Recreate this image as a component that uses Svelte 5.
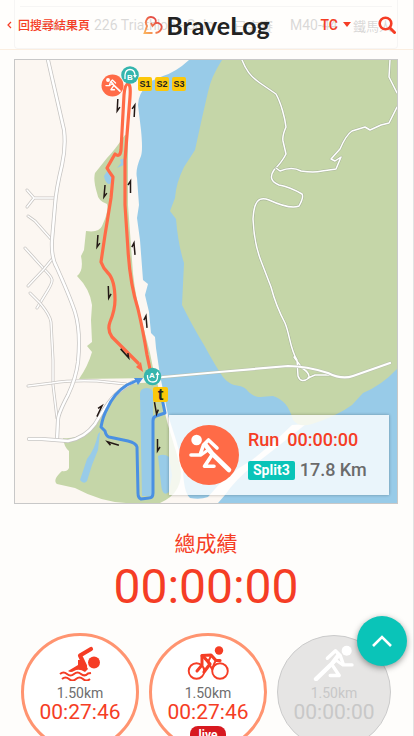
<script>
  const arrows = [
    [118, 105, 183], [134, 111, 3], [105, 191, 185], [130, 187, 0],
    [98, 241, 184], [134, 249, -5], [109, 292, 178], [146, 322, -5],
    [125, 353, 138], [156, 408, 170], [99, 411, 25], [158, 445, 180], [113, 444, -73]
  ];

  const lanes = [
    'M27 190 L34 198 L55 198 M34 198 L27 207',
    'M28 216 L35 221 L51 239',
    'M25 248 L44 269 C54 279 54 280 48 290 L37 308',
    'M53 258 L44 269 L28 286',
    'M30 293 L40 303 Q50 315 51 322 L53 360 L53 385 L57 418',
    'M28 386 L52 383 Q70 380 97 381 L126 384'
  ];
  const avenues = [
    'M48 60 L56 95 L64 130 Q66 147 62 165 Q56 190 55 205 L52 240 Q51 258 57 268 Q70 297 75 312 Q81 332 78 362 Q76 378 68 395 Q58 414 58 420 L57 440',
    'M29 439 L42 439 L68 441 Q85 438 95 424 C107 404 112 394 133 382'
  ];
  const hills = [
    'M242 60 C246 70 250 76 260 83 L276 94 C281 103 285 118 286 127 Q282 136 283 141 L286 154 Q282 162 274 170 Q267 180 279 185 Q290 187 302 194 Q304 197 299 206 C292 209 280 205 269 200 C258 196 254 202 253 219 Q254 243 261 261 L271 287 Q276 306 285 323 C290 335 290 349 297 360 L298 376 Q301 384 309 378 Q310 373 302 368 L294 357 M308 378 L315 375 L331 375',
    'M276 168 L280 171 Q292 166 301 171 Q314 173 322 171 L336 169 L341 157 L335 161 L331 159 L340 149 Q346 135 352 131 L365 127 L370 130 L381 125 L389 123 L397 107',
    'M390 60 L389 77 L397 93'
  ];

  const legs = [
    { kind: 'swim', km: '1.50km', time: '00:27:46', done: true, live: false },
    { kind: 'bike', km: '1.50km', time: '00:27:46', done: true, live: true },
    { kind: 'run', km: '1.50km', time: '00:00:00', done: false, live: false }
  ];
</script>

{#snippet runner()}
  <g fill="none" stroke="currentColor" stroke-width="3.600" stroke-linecap="round" stroke-linejoin="round">
    <circle cx="17.600" cy="15" r="5.300" fill="currentColor" stroke="none" />
    <path d="M12 30 H21 L24.500 20 L29.500 15 L38 23" />
    <path d="M26.500 20 L33 28.500 L50 45" stroke-width="4.600" />
    <path d="M33 29 L29 25 L22 30" stroke-width="3" />
    <path d="M33 30 L25.500 41.200 H35" />
  </g>
{/snippet}

<div class="page">
  <header class="bar">
    <a class="back" href="#results">
      <svg width="5" height="8" viewBox="0 0 5 8" aria-hidden="true"><path d="M4 1 L1 4 L4 7" fill="none" stroke="currentColor" stroke-width="1.200" /></svg>
      回搜尋結果頁
    </a>
    <a class="brand" href="#home">
      <svg width="20" height="20" viewBox="0 0 20 20" aria-hidden="true">
        <defs><linearGradient id="heart" x1="0" y1="1" x2="1" y2="0"><stop offset="0" stop-color="#fbb35c" /><stop offset="0.500" stop-color="#ef6b4a" /><stop offset="1" stop-color="#d8283c" /></linearGradient></defs>
        <path d="M9.500 18 H1.500 L4 11 C1 6.500 4.500 2 8 2 C12 2 14 5.500 12 8.500 L9.500 11 L8 8 M12 8.500 C15.500 6.500 19.500 10 18.500 13 C18 15.500 15.500 17.500 12.500 18" fill="none" stroke="url(#heart)" stroke-width="1.800" />
      </svg>
      <span>BraveLog</span>
    </a>
    <div class="tools">
      <button class="lang" type="button">TC<span class="caret"></span></button>
      <button class="search" type="button" aria-label="Search">
        <svg width="18" height="18" viewBox="0 0 18 18" aria-hidden="true"><circle cx="7.500" cy="7.500" r="5.800" fill="none" stroke="currentColor" stroke-width="2.600" /><path d="M12 12 L16.500 16.500" stroke="currentColor" stroke-width="3" stroke-linecap="round" /></svg>
      </button>
    </div>
  </header>

  <section class="entry">
    <div class="row">
      <span class="bib">#0038</span>
      <span class="race">226 Triathlon - Solo</span>
      <span class="state">已完賽</span>
      <span class="group">M40-44</span>
      <span class="team">鐵馬人</span>
    </div>
  </section>

  <section class="map">
    <svg class="chart" viewBox="15 60 382 443" role="img" aria-label="Race course map">
      <rect x="15" y="60" width="382" height="443" fill="#fcf7f2" />
      <path fill="#98cbe8" d="M189 60 Q176 72 163 76 L149 82 Q138 94 138 105 L141 130 Q143 150 141 156 Q135 170 137 178 L139 205 L137 218 L140 240 L143 280 L148 284 L145 295 L149 312 L151 333 L155 337 L156 348 L160 375 L164 395 L168 415 L176 440 L183 465 Q183 492 190 498 Q200 500 208 497 L216 503 H397 V60 Z" />
      <path fill="#fcf7f2" d="M208 497 Q225 475 252 460 Q278 439 292 425 L306 424 Q275 449 254 465 Q235 480 225 495 L218 503 H207 Z" />
      <path fill="#c5d6a8" d="M222 60 Q211 77 208 92 L202 118 L195 150 L184 167 Q176 183 175 198 L170 211 L176 219 Q178 244 184 263 L182 305 Q193 327 204 345 Q216 367 223 377 C233 389 239 383 246 389 C256 401 262 396 273 396 C284 400 289 406 293 420 Q299 428 312 424 Q337 416 352 405 L363 393 Q382 385 397 369 V60 Z" />
      <path fill="#c5d6a8" d="M125 135 Q114 151 107 158 L95 173 Q93 180 97 193 Q98 201 107 204 Q109 211 102 226 Q99 233 86 231 L84 250 L81 256 Q84 271 77 276 Q90 289 92 305 L91 320 L92 342 L87 346 L92 352 Q88 366 79 379 L155 378 L150 353 L141 318 Q133 285 132 260 L128 205 V135 Z" />
      <path fill="#c5d6a8" d="M125 384 Q110 398 100 419 Q84 440 63 438 Q64 447 69 451 V468 Q67 472 62 471 Q52 480 57 484 L75 488 Q101 502 126 503 H160 Q185 492 180 465 L168 425 L157 382 Z" />
      <path fill="#98cbe8" d="M140 394 Q140 388 147 388 Q153 388 153 395 V496 H142 Z M100 432 L98 450 L92 465 L87 481 Q84 485 80 480 L87 459 Q95 449 98 434 Z M158 456 Q164 453 169 457 L172 475 L169 492 Q162 498 161 483 Z M104 176 L109 168 L113 180 Q109 188 105 180 Z M120 160 Q126 156 126 164 L117 168 L121 163 Z" />

      <g fill="none" stroke-linejoin="round" stroke-linecap="round">
        {#each lanes as d}
          <path {d} stroke="#c9c6c3" stroke-width="3" /><path {d} stroke="#fff" stroke-width="1.500" />
        {/each}
        {#each avenues as d}
          <path {d} stroke="#c6c4c2" stroke-width="4" /><path {d} stroke="#fff" stroke-width="2.500" />
        {/each}
        {#each hills as d}
          <path {d} stroke="#a9b59b" stroke-width="2.600" /><path {d} stroke="#fff" stroke-width="1.500" />
        {/each}
        <path d="M152 378 L219 372 L288 366 Q306 366 328 373 Q342 380 353 376 L390 363" stroke="#b8bfae" stroke-width="3.200" />
        <path d="M152 378 L219 372 L288 366 Q306 366 328 373 Q342 380 353 376 L390 363" stroke="#fff" stroke-width="2.200" />
        <path d="M162 398 L165 413 L156 416 Q153 417 153 421 V493 Q153 498 149 498 L141 499 Q138 498 138 493 L137 447 Q136 443 128 441 L109 437 Q106 436 105 431 L101 427 Q103 416 107 409 Q114 393 127 385 L138 380" stroke="#4a90e2" stroke-width="3" />
        <path d="M151 374 L147 355 Q143 330 138 309 Q130 284 128 250 L125 205 V160 L130 97 Q131 84 128 84 Q125 84 124 95 L121 150 Q120 158 115 154 L107 168 Q108 170 113 177 L111 198 L105 235 L101 262 Q103 268 108 273 Q115 280 115 300 Q115 310 110 322 Q107 330 112 337 L138 363" stroke="#ff6b47" stroke-width="3.200" />
      </g>
      <path d="M143 372 L141 362 L136 367 Z" fill="#ff6b47" />
      <path d="M143 378 L134 378 L138 385 Z" fill="#4a90e2" />

      {#each arrows as [x, y, turn]}
        <path transform="translate({x} {y}) rotate({turn})" d="M0.500 6 V-6 L-2 -2" fill="none" stroke="#231815" stroke-width="1.500" />
      {/each}

      <circle cx="112.500" cy="85.500" r="11" fill="#ff6b47" />
      <g transform="translate(101.500 74.500) scale(0.370)" color="#fff">{@render runner()}</g>
      <circle cx="130" cy="75" r="8.800" fill="#35b5ad" />
      <path d="M125 79 V75 Q125.500 69.500 130 69.500 Q134.500 69.500 135 75" fill="none" stroke="#fff" stroke-width="1.300" />
      <path d="M133 75 H137 L135 78 Z" fill="#fff" />
      <text class="pin" x="130" y="79.500" fill="#fff">B</text>
      <circle cx="152.500" cy="376.500" r="8.800" fill="#35b5ad" />
      <path d="M147.500 375 V377 Q148 382 153 382 Q157.500 382 157.500 377 V375" fill="none" stroke="#fff" stroke-width="1.300" />
      <path d="M155.500 375 H159.500 L157.500 371.500 Z" fill="#fff" />
      <text class="pin" x="152" y="377.500" fill="#fff">A</text>
      {#each ['S1', 'S2', 'S3'] as stop, i}
        <rect x={138 + i * 17} y="77" width="14" height="14" rx="2" fill="#fcc70a" />
        <text class="stop" x={145 + i * 17} y="87">{stop}</text>
      {/each}
      <rect x="153" y="387" width="15" height="15" rx="2" fill="#fcc70a" />
      <text class="tee" x="160.500" y="400">t</text>
    </svg>

    <div class="status">
      <svg width="60" height="60" viewBox="0 0 60 60" aria-hidden="true"><circle cx="30" cy="30" r="30" fill="#ff6b47" /><g color="#fff">{@render runner()}</g></svg>
      <div class="facts">
        <p class="now"><span>Run</span><span>00:00:00</span></p>
        <p class="split"><b>Split3</b><span>17.8 Km</span></p>
      </div>
    </div>
  </section>

  <section class="total">
    <h2>總成績</h2>
    <p>00:00:00</p>
  </section>

  <section class="legs">
    {#each legs as leg}
      <article class="leg" class:idle={!leg.done}>
        {#if leg.kind === 'swim'}
          <svg width="42" height="36" viewBox="0 0 42 36" aria-hidden="true">
            <circle cx="35" cy="17.500" r="6" fill="currentColor" />
            <path d="M32 4 L21 10.500 L26 21" fill="none" stroke="currentColor" stroke-width="4.200" stroke-linecap="round" stroke-linejoin="round" />
            <path d="M19 15 L24 15 L29 24 L26 27 Q20 23 15 26 Q12 28 9 26 L19 20 Z" fill="currentColor" />
            <path d="M1 29 Q4.500 26 8 29 T15 29 T22 29 T29 28.500 L32 28 M3 34 Q6.500 31 10 34 T17 34 T24 34 T31 34" fill="none" stroke="currentColor" stroke-width="2" />
          </svg>
        {:else if leg.kind === 'bike'}
          <svg width="42" height="36" viewBox="0 0 42 36" aria-hidden="true">
            <g fill="none" stroke="currentColor" stroke-linejoin="round" stroke-linecap="round">
              <circle cx="9.500" cy="26" r="7.800" stroke-width="1.900" /><circle cx="33" cy="26" r="7.800" stroke-width="1.900" />
              <path d="M15 10.500 L24 10 L29 15.500 H33" stroke-width="3.200" />
              <path d="M15 11 L15 20 L10 26" stroke-width="3" />
              <path d="M16 11 L23 19 L17 27" stroke-width="3.200" />
              <path d="M24 11 L21 17 L25 24 L28 17" stroke-width="2" />
            </g>
            <circle cx="32" cy="5.500" r="4.200" fill="currentColor" />
          </svg>
        {:else}
          <svg width="42" height="36" viewBox="10 9 42 38" aria-hidden="true"><g transform="translate(62 0) scale(-1 1)">{@render runner()}</g></svg>
        {/if}
        <span class="km">{leg.km}</span>
        <span class="time">{leg.time}</span>
        {#if leg.live}<span class="live">live</span>{/if}
      </article>
    {/each}
  </section>

  <button class="top" type="button" aria-label="Back to top">
    <svg width="20" height="12" viewBox="0 0 20 12" aria-hidden="true"><path d="M1 11 L10 2 L19 11" fill="none" stroke="#fff" stroke-width="2.600" /></svg>
  </button>
</div>

<style>
  :global(body) { background: #fefdfb; }
  .page {
    position: relative;
    box-sizing: border-box;
    height: 100vh;
    overflow: hidden;
    padding: 0 15px 0 14px;
    border-right: 1px solid #e2e2e2;
    background: #fefdfb;
    font-family: Roboto, "Noto Sans CJK TC", sans-serif;
    color: #f53d25;
  }
  a { color: inherit; text-decoration: none; }
  button { padding: 0; border: 0; background: none; color: inherit; font: inherit; cursor: pointer; }
  p, h2 { margin: 0; }

  .bar {
    position: absolute;
    z-index: 2;
    top: 0;
    left: 0;
    right: 0;
    box-sizing: border-box;
    height: 50px;
    padding: 0 7px;
    display: grid;
    grid-template-columns: 1fr auto 1fr;
    align-items: center;
    border-bottom: 1px solid #fbeee0;
    background: rgba(255, 254, 253, 0.8);
  }
  .back { display: flex; align-items: center; gap: 6px; font-size: 12px; font-weight: 500; white-space: nowrap; }
  .brand { display: flex; align-items: center; gap: 3px; color: #222; font: 700 25px/30px Lato, sans-serif; }
  .tools { display: flex; justify-content: flex-end; align-items: center; gap: 27px; padding-right: 10px; }
  .lang { display: flex; align-items: center; gap: 5px; font-size: 14px; font-weight: 500; }
  .caret { border: 4px solid transparent; border-top: 5px solid currentColor; border-bottom: 0; }
  .search { display: flex; }

  .entry {
    box-sizing: border-box;
    height: 49px;
    padding: 6px 5px 6px;
    border: 1px solid #cfcfcf;
    border-top: 0;
    border-radius: 0 0 4px 4px;
  }
  .row {
    display: flex;
    align-items: center;
    height: 36px;
    padding-left: 20px;
    border-top: 1px solid #cfcfcf;
    color: #444;
    font-size: 13px;
    white-space: nowrap;
  }
  .bib { flex: 0 0 54px; }
  .race { flex: 1; font-size: 14px; }
  .state { flex: 0 0 56px; }
  .group { flex: 0 0 63px; font-size: 14px; }

  .map { position: relative; margin-top: 10px; border: 1px solid #c8c8c8; }
  .chart { display: block; width: 100%; height: auto; }
  .pin { font: 700 8px "Liberation Sans", sans-serif; text-anchor: middle; }
  .stop { font: 700 9px "Liberation Sans", sans-serif; text-anchor: middle; fill: #222; }
  .tee { font: 700 17px "Liberation Sans", sans-serif; text-anchor: middle; fill: #222; }

  .status {
    position: absolute;
    right: 8px;
    bottom: 8px;
    box-sizing: border-box;
    width: 220px;
    height: 80px;
    display: flex;
    align-items: center;
    gap: 9px;
    padding: 0 10px;
    background: rgba(255, 255, 255, 0.8);
    box-shadow: 0 0 3px rgba(0, 0, 0, 0.3);
  }
  .facts { display: flex; flex-direction: column; gap: 10px; font-size: 18px; line-height: 20px; font-weight: 500; }
  .now { display: flex; gap: 8px; }
  .split { display: flex; align-items: center; gap: 5px; color: #6b6b6b; }
  .split b { padding: 0 5px; border-radius: 2px; background: #0ac4b8; color: #fff; font-size: 14px; line-height: 19px; }

  .total { padding-top: 27px; text-align: center; }
  .total h2 { font-size: 21px; line-height: 26px; font-weight: 400; }
  .total p { font-size: 48px; line-height: 60px; }

  .legs { display: flex; justify-content: center; align-items: center; gap: 10px; padding-top: 16px; }
  .leg {
    position: relative;
    box-sizing: border-box;
    width: 118px;
    height: 118px;
    display: flex;
    flex-direction: column;
    align-items: center;
    padding-top: 9px;
    border: 3px solid #ff9470;
    border-radius: 50%;
    background: #fff;
  }
  .leg.idle { width: 114px; height: 114px; border: 1px solid #cbcbcb; background: #e6e5e4; color: #fff; }
  .km { margin-top: 3px; color: #6e6e6e; font-size: 14px; line-height: 18px; }
  .time { font-size: 21px; line-height: 20px; }
  .idle .km, .idle .time { color: #c8c8c8; }
  .live {
    position: absolute;
    bottom: 4px;
    padding: 0 9px;
    border-radius: 8px;
    background: #d71920;
    color: #fff;
    font-size: 12px;
    line-height: 18px;
    font-weight: 700;
  }

  .top {
    position: absolute;
    z-index: 3;
    right: 6px;
    bottom: 70px;
    width: 50px;
    height: 50px;
    display: flex;
    align-items: center;
    justify-content: center;
    border-radius: 50%;
    background: #0ac4b8;
    box-shadow: 0 2px 6px rgba(0, 0, 0, 0.4);
  }
</style>
